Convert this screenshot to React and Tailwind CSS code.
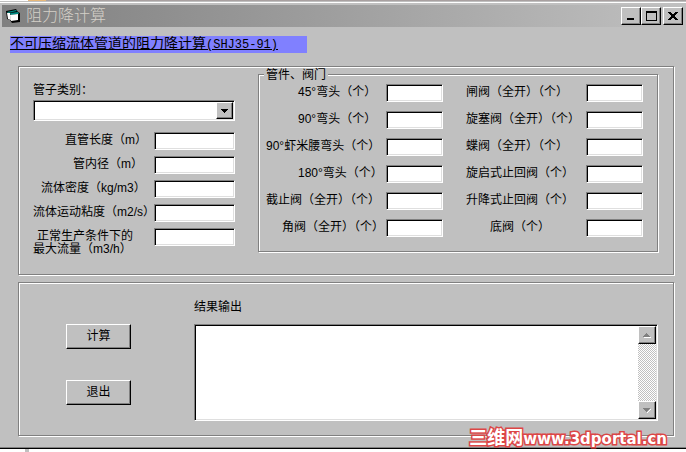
const PIPE_FIELDS = [
  { id: "length", label: "直管长度（m）", indent: "pl-8" },
  { id: "diameter", label: "管内径（m）", indent: "pl-10" },
  { id: "density", label: "流体密度（kg/m3）", indent: "pl-2" },
  { id: "viscosity", label: "流体运动粘度（m2/s）", indent: "pl-0" },
];

// 管件、阀门：按行排列，左右各一列
const FITTINGS = [
  { id: "elbow45", label: "45°弯头（个）", indent: "pl-8" },
  { id: "gate", label: "闸阀（全开）（个）", indent: "pl-0" },
  { id: "elbow90", label: "90°弯头（个）", indent: "pl-8" },
  { id: "plug", label: "旋塞阀（全开）（个）", indent: "pl-0" },
  { id: "miter90", label: "90°虾米腰弯头（个）", indent: "pl-0" },
  { id: "butterfly", label: "蝶阀（全开）（个）", indent: "pl-0" },
  { id: "elbow180", label: "180°弯头（个）", indent: "pl-8" },
  { id: "swing", label: "旋启式止回阀（个）", indent: "pl-0" },
  { id: "globe", label: "截止阀（全开）（个）", indent: "pl-0" },
  { id: "lift", label: "升降式止回阀（个）", indent: "pl-0" },
  { id: "angle", label: "角阀（全开）（个）", indent: "pl-4" },
  { id: "foot", label: "底阀（个）", indent: "pl-6" },
];

const SUNKEN =
  "bg-white border border-t-[#808080] border-l-[#808080] border-b-white border-r-white shadow-[inset_1px_1px_0_#000,inset_-1px_-1px_0_#dfdfdf]";
const RAISED =
  "bg-[#c0c0c0] border border-t-white border-l-white border-b-black border-r-black shadow-[inset_-1px_-1px_0_#808080]";
const GROOVE =
  "border border-[#808080] shadow-[1px_1px_0_#fff,inset_1px_1px_0_#fff]";

function Field({ id, label, indent, inputWidth }) {
  return (
    <div className="flex items-start">
      <label htmlFor={id} className={`flex-1 min-w-0 pt-[2px] whitespace-nowrap ${indent}`}>
        {label}
      </label>
      <input id={id} type="text" className={`h-[18px] px-1 outline-none ${inputWidth} ${SUNKEN}`} />
    </div>
  );
}

function CaptionButton({ label, children }) {
  return (
    <button aria-label={label} className={`w-5 h-[18px] flex items-center justify-center ${RAISED}`}>
      <svg width="12" height="12" viewBox="0 0 12 12" shapeRendering="crispEdges">
        {children}
      </svg>
    </button>
  );
}

function TitleBar() {
  return (
    <header className="flex items-center h-[22px] mx-[2px] pl-1 pr-px bg-linear-to-r from-[#808080] to-[#c0c0c0]">
      <svg width="14" height="14" viewBox="0 0 14 14">
        <path d="M0 2l10-2 2 3 2 1v9l-8 1-2-3-3-1z" fill="#000" />
        <path d="M1 3l9-2 1 1-9 2z" fill="#008c84" />
        <path d="M1 4l3 0 1 7-3-1z" fill="#fff" />
        <path d="M4 4l8-1 1 2-8 1z" fill="#008c84" />
        <path d="M4 6l8-1 0 6-7 1z" fill="#fff" />
      </svg>
      <h1 className="flex-1 pl-[6px] text-base leading-5 font-light text-[#d4d0c8]">阻力降计算</h1>
      <div className="flex">
        <CaptionButton label="最小化">
          <path d="M2 8h7v2H2z" />
        </CaptionButton>
        <CaptionButton label="最大化">
          <path fillRule="evenodd" d="M1 1h11v10H1zM2 3v7h9V3z" />
        </CaptionButton>
      </div>
      <div className="flex pl-[2px]">
        <CaptionButton label="关闭">
          <path d="M1 2h3v1h1v1h2V3h1V2h3v1h-1v1H9v1H8v2h1v1h1v1h1v1H8V9H7V8H5v1H4v1H1V9h1V8h1V7h1V5H3V4H2V3H1z" />
        </CaptionButton>
      </div>
    </header>
  );
}

function PipePanel() {
  return (
    <section className={`flex gap-[23px] pl-[14px] pr-[15px] pt-[7px] pb-[22px] ${GROOVE}`}>
      <div className="w-[202px] pt-[10px]">
        <label htmlFor="kind" className="block">管子类别：</label>
        <div className="relative mt-[3px]">
          <select id="kind" className={`block w-full h-[21px] px-1 appearance-none outline-none ${SUNKEN}`} />
          <span className={`absolute right-[2px] top-[2px] w-[17px] h-[17px] flex items-center justify-center pointer-events-none ${RAISED}`}>
            <svg width="7" height="4" viewBox="0 0 7 4" shapeRendering="crispEdges">
              <path d="M0 0h7v1H6v1H5v1H4v1H3V3H2V2H1V1H0z" />
            </svg>
          </span>
        </div>
        <div className="flex flex-col gap-[6px] mt-[11px]">
          {PIPE_FIELDS.map((f) => (
            <Field key={f.id} {...f} inputWidth="w-[81px]" />
          ))}
          <div className="flex items-start h-[18px]">
            <label htmlFor="flow" className="flex-1 min-w-0 pt-[2px] whitespace-nowrap">
              <span className="block pl-1">正常生产条件下的</span>
              <span className="block">最大流量（m3/h）</span>
            </label>
            <input id="flow" type="text" className={`w-[81px] h-[18px] px-1 outline-none ${SUNKEN}`} />
          </div>
        </div>
      </div>

      <fieldset className={`relative flex-1 min-w-0 pl-[7px] pr-[14px] pt-[9px] pb-[14px] ${GROOVE}`}>
        <legend className="absolute left-[5px] -top-[6px] px-[2px] bg-[#c0c0c0]">管件、阀门</legend>
        <div className="grid grid-cols-2 gap-x-[23px] gap-y-[9px]">
          {FITTINGS.map((f) => (
            <Field key={f.id} {...f} inputWidth="w-[57px]" />
          ))}
        </div>
      </fieldset>
    </section>
  );
}

function ScrollButton({ label, d, light }) {
  return (
    <button aria-label={label} className={`w-full h-[18px] flex items-center justify-center ${RAISED}`}>
      <svg width="8" height="5" viewBox="0 0 8 5" shapeRendering="crispEdges">
        <path d={light} fill="#fff" />
        <path d={d} fill="#808080" />
      </svg>
    </button>
  );
}

function ResultPanel() {
  return (
    <section className={`flex gap-[63px] mt-[7px] pl-[47px] pr-[15px] pt-[18px] pb-[14px] ${GROOVE}`}>
      <div className="flex flex-col gap-[31px] w-[65px] pt-[23px]">
        <button className={`h-[25px] ${RAISED}`}>计算</button>
        <button className={`h-[25px] ${RAISED}`}>退出</button>
      </div>
      <div className="flex-1 min-w-0">
        <label htmlFor="result" className="block">结果输出</label>
        <div className={`flex h-[97px] mt-[10px] p-px ${SUNKEN}`}>
          <textarea id="result" className="flex-1 min-w-0 px-1 resize-none outline-none" />
          <div className="flex flex-col justify-between w-[18px] bg-[repeating-conic-gradient(#fff_0_25%,#c0c0c0_0_50%)] bg-[length:2px_2px]">
            <ScrollButton
              label="向上"
              d="M3 0h1v1h1v1h1v1h1v1H0V3h1V2h1V1h1z"
              light="M1 4h7v1H1z"
            />
            <ScrollButton
              label="向下"
              d="M0 0h7v1H6v1H5v1H4v1H3V3H2V2H1V1H0z"
              light="M7 1h1v1H7v1H6v1H5v1H4V4h1V3h1V2h1z"
            />
          </div>
        </div>
      </div>
    </section>
  );
}

export default function App() {
  return (
    <div className="min-h-screen bg-white text-black text-xs leading-[13px] font-['Liberation_Sans','Noto_Sans_CJK_SC',sans-serif]">
      <div className="flex h-px">
        <div className="w-7 bg-white" />
        <div className="w-[18px] bg-[#e8b878]" />
        <div className="flex-1 bg-[#a8a0a0]" />
      </div>
      <main className="relative bg-[#c0c0c0] pt-[3px] pb-px border-t border-t-[#c0c0c0] border-b border-b-black shadow-[inset_0_1px_0_#fff,inset_0_-1px_0_#808080]">
        <TitleBar />
        <div className="pl-[10px] pt-[9px]">
          <h2 className="w-[297px] h-[17px] bg-[#8080ff] text-sm leading-[15px] whitespace-nowrap underline">
            不可压缩流体管道的阻力降计算
            <span className="font-['Liberation_Mono',monospace] text-xs">(SHJ35-91)</span>
          </h2>
        </div>
        <div className="pl-[18px] pr-3 pt-[13px] pb-[11px]">
          <PipePanel />
          <ResultPanel />
        </div>
        <a
          href="#"
          className="absolute right-[19px] bottom-0 text-[15px] leading-[18px] font-bold text-white whitespace-nowrap font-['DejaVu_Sans','Noto_Sans_CJK_SC',sans-serif] [-webkit-text-stroke:3px_#dc4646] [paint-order:stroke_fill]"
        >
          <span className="text-[18px]">三维网</span>www.3dportal.cn
        </a>
      </main>
      <div className="ml-[25px] w-1 h-[3px] bg-[#c0c0c0]" />
    </div>
  );
}
